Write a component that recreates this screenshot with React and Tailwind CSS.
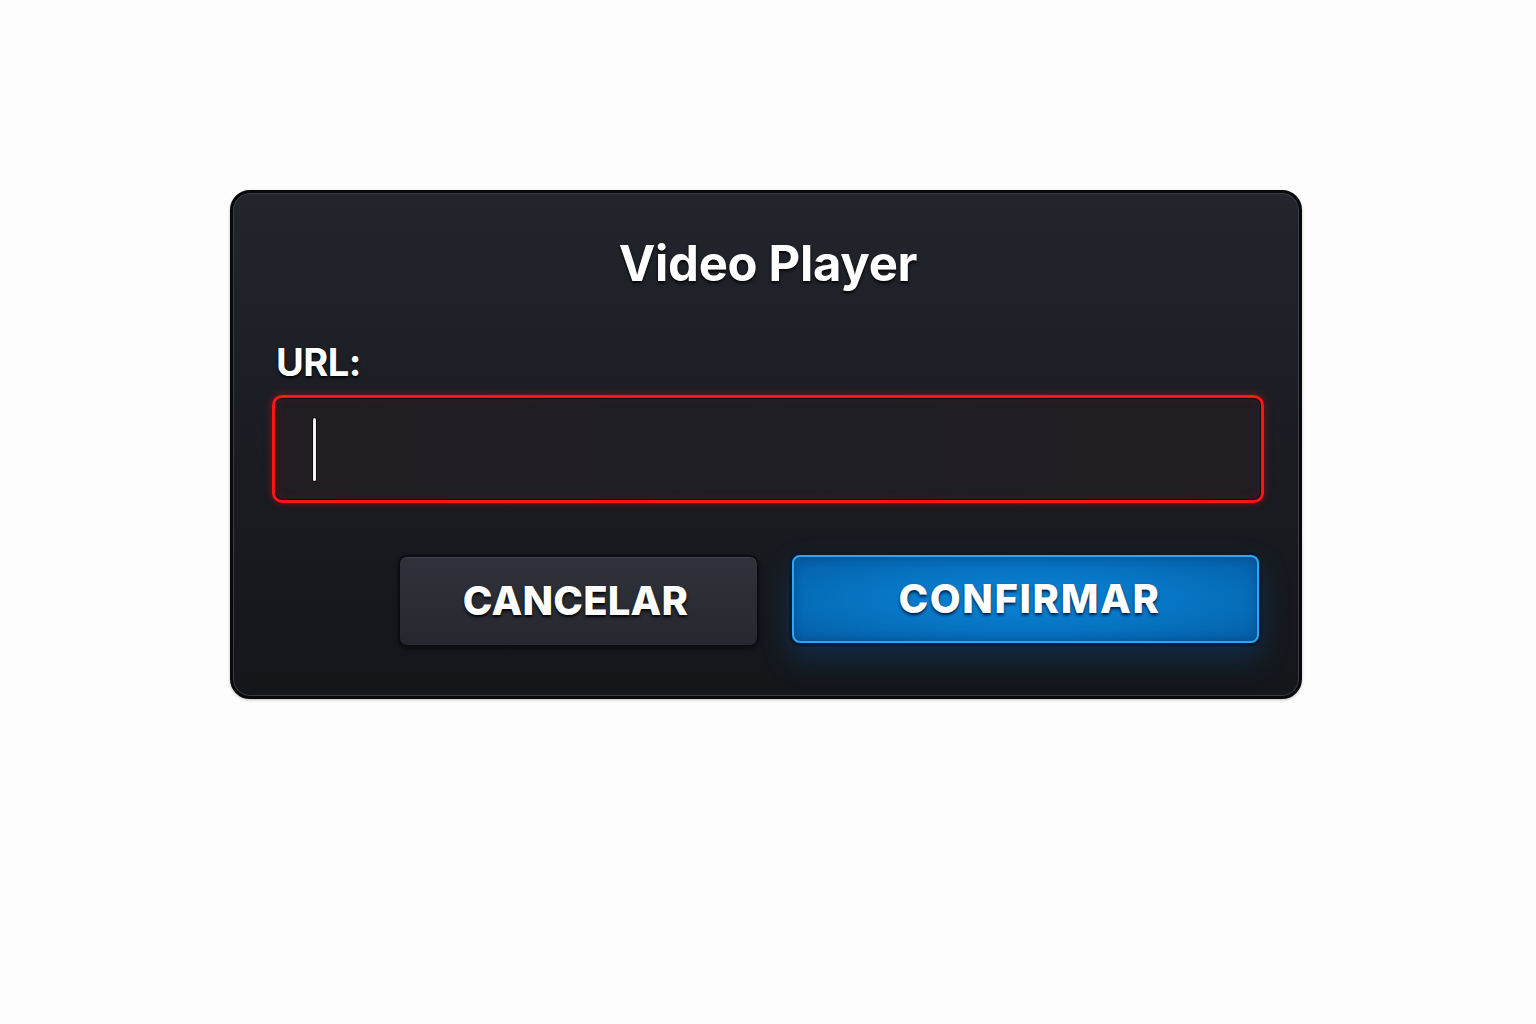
const App = () => {
  return (
    <div className="min-h-screen w-full bg-[#fdfdfd] pt-[190px] pl-[230px] font-['Inter','Liberation_Sans',sans-serif]">
      <div className="w-[1072px] h-[509px] rounded-[20px] border-[3px] border-[#08090b] bg-linear-to-b from-[#22252c] via-[#1a1c22] to-[#14161a] shadow-[inset_0_0_0_1px_#3a3d45,0_1px_3px_rgba(0,0,0,0.25)]">
        <div className="pt-[46px] pl-[39px] pr-[35px]">
          <h1 className="text-center text-[49px] leading-[50px] font-bold text-white tracking-[-0.3px] [text-shadow:0_2px_3px_rgba(0,0,0,0.9)]">
            Video Player
          </h1>

          <label className="block mt-[54px] ml-[4px] text-[38px] leading-[38px] font-bold text-white tracking-[-0.5px] [text-shadow:0_2px_3px_rgba(0,0,0,0.9)]">
            URL:
          </label>

          <div className="mt-[14px] h-[108px] w-[992px] rounded-[10px] border-[3px] border-[#ff1414] bg-linear-to-r from-[#211d23] via-[#1e1e24] to-[#211d22] shadow-[inset_0_0_0_1px_#120b0e,inset_0_0_12px_rgba(255,30,30,0.08),0_0_9px_rgba(255,20,20,0.4)] flex items-center pl-[38px]">
            <span className="block w-[3px] h-[63px] rounded-full bg-[#f2f2f2] shadow-[0_0_0_1px_#0b0b0d]"></span>
          </div>

          <div className="mt-[52px] flex justify-end gap-[30px] pr-[2px]">
            <button className="w-[361px] h-[92px] rounded-[9px] border-[2px] border-[#0c0d11] bg-linear-to-b from-[#30323b] to-[#262830] shadow-[inset_0_1px_0_#44464f,0_2px_4px_rgba(0,0,0,0.5)] pr-[6px] text-[40px] font-extrabold text-white tracking-[0.2px] [text-shadow:0_2px_3px_rgba(0,0,0,0.95)]">
              CANCELAR
            </button>
            <div className="w-[473px] h-[94px] rounded-[11px] bg-[#0a1a2c] p-[3px] -mt-[3px] shadow-[0_14px_30px_rgba(0,120,220,0.22)]">
              <button className="w-full h-full rounded-[8px] border-[2px] border-[#2aa8f7] bg-[radial-gradient(ellipse_at_center,#0a86d6_0%,#0672c0_55%,#055ea6_100%)] shadow-[inset_0_0_10px_rgba(0,40,90,0.4)] pl-[8px] text-[40px] font-extrabold text-white tracking-[1.6px] [text-shadow:0_2px_3px_rgba(0,20,60,0.95)]">
                CONFIRMAR
              </button>
            </div>
          </div>
        </div>
      </div>
    </div>
  );
};

export default App;
